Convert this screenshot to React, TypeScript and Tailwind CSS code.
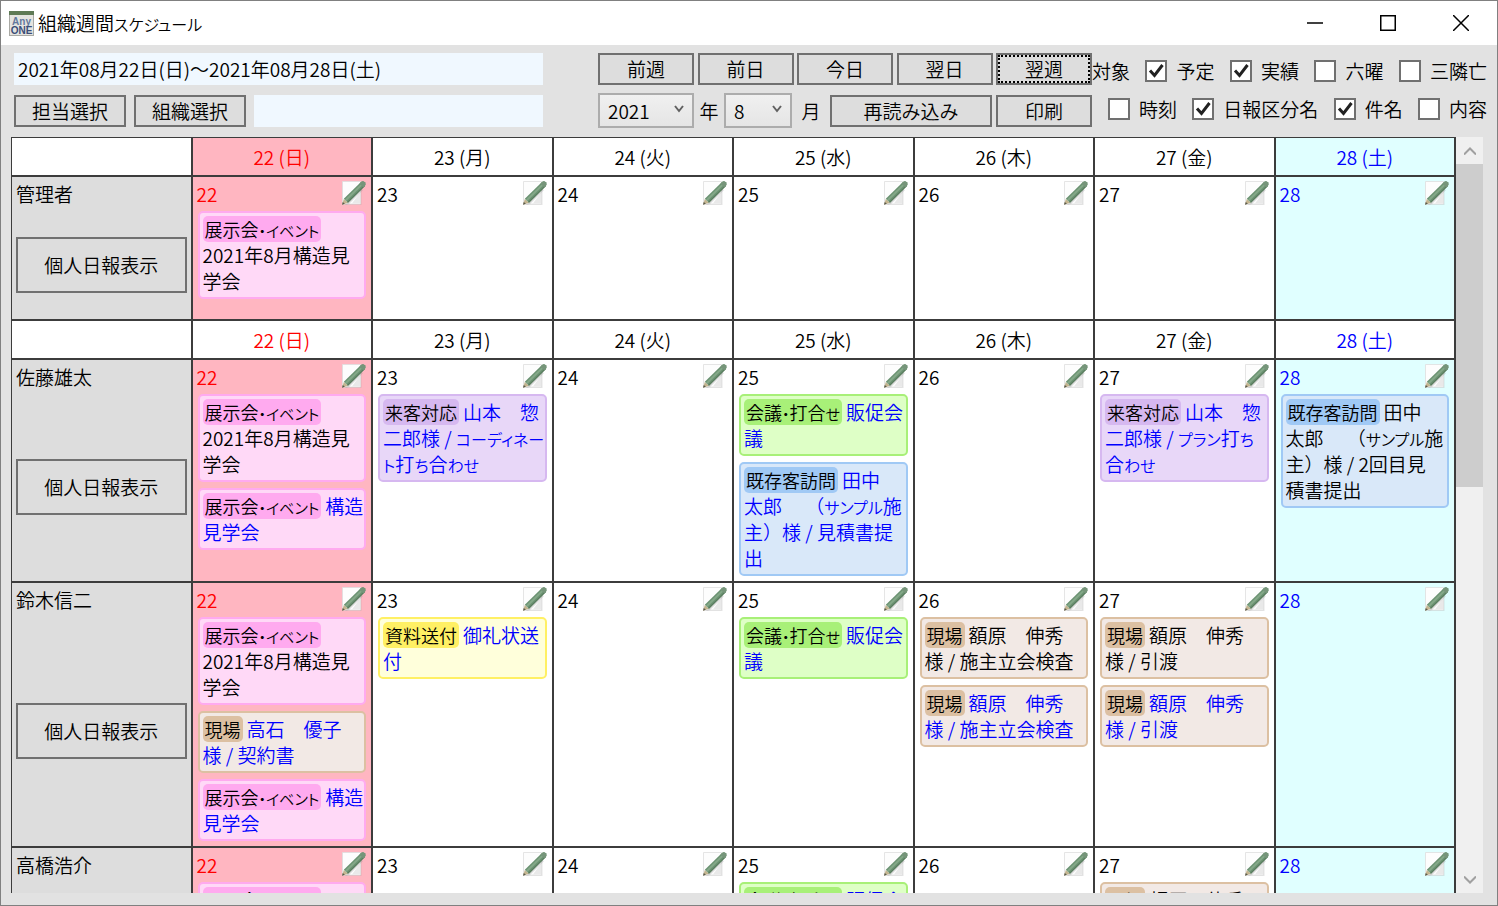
import React from 'react';
import clsx from 'clsx';

type Tone = 'pink' | 'purple' | 'green' | 'blue' | 'yellow' | 'brown';

type Entry = {
  tone: Tone;
  tag: string;
  lines: string[];
  plan?: boolean;
};

type Member = {
  name: string;
  height: string;
  days: Entry[][];
};

const cardTones: Record<Tone, string> = {
  pink: 'bg-[#ffd9f7] border-[#ffaaef]',
  purple: 'bg-[#e8d7f8] border-[#d6b8f0]',
  green: 'bg-[#deffc6] border-[#a8f078]',
  blue: 'bg-[#d9e8f9] border-[#a0c9f5]',
  yellow: 'bg-[#ffffdb] border-[#fff064]',
  brown: 'bg-[#f2e9e5] border-[#dcc0a2]',
};

const tagTones: Record<Tone, string> = {
  pink: 'bg-[#ffaaef]',
  purple: 'bg-[#d6b8f0]',
  green: 'bg-[#a8f078]',
  blue: 'bg-[#a0c9f5]',
  yellow: 'bg-[#fff064]',
  brown: 'bg-[#dcc0a2]',
};

const week = [
  { date: 22, label: '日' },
  { date: 23, label: '月' },
  { date: 24, label: '火' },
  { date: 25, label: '水' },
  { date: 26, label: '木' },
  { date: 27, label: '金' },
  { date: 28, label: '土' },
];

const event: Entry = { tone: 'pink', tag: '展示会・イベント', lines: ['', '2021年8月構造見', '学会'] };
const eventPlan: Entry = { tone: 'pink', tag: '展示会・イベント', lines: ['構造', '見学会'], plan: true };
const meeting: Entry = { tone: 'green', tag: '会議・打合せ', lines: ['販促会', '議'], plan: true };
const inspection: Entry = { tone: 'brown', tag: '現場', lines: ['額原　伸秀', '様 / 施主立会検査'] };
const handover: Entry = { tone: 'brown', tag: '現場', lines: ['額原　伸秀', '様 / 引渡'] };

const admin: Member = { name: '管理者', height: 'h-[144px]', days: [[event], [], [], [], [], [], []] };

const members: Member[] = [
  {
    name: '佐藤雄太',
    height: 'h-[223px]',
    days: [
      [event, eventPlan],
      [{ tone: 'purple', tag: '来客対応', lines: ['山本　惣', '二郎様 / コーディネー', 'ト打ち合わせ'], plan: true }],
      [],
      [
        meeting,
        { tone: 'blue', tag: '既存客訪問', lines: ['田中', '太郎　 （サンプル施', '主）様 / 見積書提', '出'], plan: true },
      ],
      [],
      [{ tone: 'purple', tag: '来客対応', lines: ['山本　惣', '二郎様 / プラン打ち', '合わせ'], plan: true }],
      [{ tone: 'blue', tag: '既存客訪問', lines: ['田中', '太郎　 （サンプル施', '主）様 / 2回目見', '積書提出'] }],
    ],
  },
  {
    name: '鈴木信二',
    height: 'h-[265px]',
    days: [
      [event, { tone: 'brown', tag: '現場', lines: ['高石　優子', '様 / 契約書'], plan: true }, eventPlan],
      [{ tone: 'yellow', tag: '資料送付', lines: ['御礼状送', '付'], plan: true }],
      [],
      [meeting],
      [inspection, { ...inspection, plan: true }],
      [handover, { ...handover, plan: true }],
      [],
    ],
  },
  {
    name: '高橋浩介',
    height: 'h-[223px]',
    days: [[event], [], [], [meeting], [], [handover], []],
  },
];

const dayText = (i: number) => clsx(i === 0 && 'text-[#ff0000]', i === 6 && 'text-[#0000ff]');
const dayBg = (i: number) => (i === 0 ? 'bg-[#ffb6c1]' : i === 6 ? 'bg-[#e0ffff]' : 'bg-white');

// kana is set a little smaller and proportionally, kanji keeps the full body
const Kana = ({ text, className = 'text-[16px]' }: { text: string; className?: string }) => (
  <span>
    {text.split(/([ぁ-ヿ]+)/).map((part, i) =>
      i % 2 ? (
        <span key={i} className={clsx("leading-none [font-feature-settings:'palt']", className)}>{part}</span>
      ) : (
        part
      )
    )}
  </span>
);

const PencilIcon = () => (
  <svg className="w-[26px] h-[26px]" viewBox="0 0 26 26">
    <path d="M2.500 2h18v23h-18z" fill="#999" opacity="0.250" />
    <path d="M1.500 1.500h18v22.500h-18z" fill="#fdfdfd" stroke="#dedede" strokeWidth="0.800" />
    <path d="M11 23.500h8v-11z" fill="#e9e9e9" />
    <path d="M4 25L20 9l2 1L8 24z" fill="#8c8c8c" opacity="0.300" />
    <path d="M1 24.800l1.800-5.800 4.200 3.800z" fill="#c4b590" />
    <path d="M1 24.800l.8-2.800 2 1.800z" fill="#5a5a4c" />
    <path d="M2.800 18.800L20 2q2-1.400 3.800.3 1.600 1.800.1 3.800L7 22.800z" fill="#6b9272" />
    <path d="M4 19.500L20.800 3.200l1.400 1.300L5.400 20.900z" fill="#84a888" />
    <path d="M6.200 22.100L23.600 5l.2 1.200L7 22.800z" fill="#587b5d" />
    <path d="M20 2q2-1.400 3.800.3 1.600 1.800.1 3.800l-1.500 1.500-4-4z" fill="#76957a" />
  </svg>
);

const AppIcon = () => (
  <svg className="w-[25px] h-[25px]" viewBox="0 0 25 25">
    <rect x="0.500" y="0.500" width="24" height="24" fill="#e4e4e0" stroke="#a9a9a4" />
    <rect width="25" height="4" fill="#5e7a55" />
    <text x="12.500" y="14" textAnchor="middle" fontSize="10" fontWeight="700" fontFamily="Liberation Sans, sans-serif" fill="#62789c">Any</text>
    <text x="12.500" y="23" textAnchor="middle" fontSize="10" fontWeight="700" fontFamily="Liberation Sans, sans-serif" fill="#3a4d78">ONE</text>
  </svg>
);

const ToolButton = ({ children, className }: { children: React.ReactNode; className?: string }) => (
  <button className={clsx('h-8 shrink-0 border-2 border-[#707070] bg-[#dddddd] leading-7 text-center', className)}>{children}</button>
);

const Check = ({ label, checked }: { label: string; checked?: boolean }) => (
  <label className="flex items-center gap-[9px] whitespace-nowrap">
    <span className="relative w-[22px] h-[22px]">
      <input type="checkbox" defaultChecked={checked} className="peer block w-[22px] h-[22px] appearance-none border-2 border-[#707070] bg-white" />
      <svg className="absolute inset-0 hidden peer-checked:block pointer-events-none" viewBox="0 0 22 22" fill="none" stroke="#212121" strokeWidth="3">
        <path d="M5 10.500l4.500 5L17.500 5" />
      </svg>
    </span>
    {label}
  </label>
);

const Picker = ({ label, value, options, className }: { label: string; value: string; options: string[]; className: string }) => (
  <span className={clsx('relative shrink-0', className)}>
    <select aria-label={label} defaultValue={value} className="w-full h-[35px] appearance-none border-2 border-[#acacac] bg-linear-to-b from-[#f0f0f0] to-[#e5e5e5] pl-2">
      {options.map((o) => (
        <option key={o}>{o}</option>
      ))}
    </select>
    <svg className="absolute right-2.5 top-3 w-2.5 h-2 pointer-events-none" viewBox="0 0 10 8" fill="none" stroke="#606060" strokeWidth="2">
      <path d="M1 1l4 5 4-5" />
    </svg>
  </span>
);

const EntryCard = ({ entry }: { entry: Entry }) => (
  <div className={clsx('rounded-[5px] border-2 p-[3px] leading-[26px] whitespace-pre', cardTones[entry.tone], entry.plan && 'text-[#0000ff]')}>
    <div className="flex h-[26px] gap-1">
      <span className={clsx('rounded-[5px] px-0.5 text-[18px] text-black', tagTones[entry.tone])}>
        <Kana text={entry.tag} className="text-[15px]" />
      </span>
      {entry.lines[0]}
    </div>
    {entry.lines.slice(1).map((line) => (
      <div key={line} className="h-[26px]">
        <Kana text={line} />
      </div>
    ))}
  </div>
);

const MemberRow = ({ member }: { member: Member }) => (
  <tr className={member.height}>
    <th scope="row" className="h-px border-r-2 border-b-2 border-[#3c3c3c] bg-[#dddddd] p-0 [font-weight:inherit] text-left">
      <div className="flex h-full flex-col px-1">
        <div className="pt-[3px] leading-[28px]">{member.name}</div>
        <div className="flex flex-1 items-center pt-0.5">
          <button className="h-14 w-full border-2 border-[#707070]">個人日報表示</button>
        </div>
      </div>
    </th>
    {member.days.map((entries, i) => (
      <td key={week[i].date} className={clsx('border-r-2 border-b-2 border-[#3c3c3c] p-0 align-top', dayBg(i))}>
        <div className="flex h-[34px] justify-between pt-[3px] px-1">
          <span className={clsx('leading-[28px]', dayText(i))}>{week[i].date}</span>
          <button aria-label="編集" className="h-[26px]">
            <PencilIcon />
          </button>
        </div>
        <div className="flex flex-col gap-1.5 px-[5px] pb-1">
          {entries.map((entry, n) => (
            <EntryCard key={n} entry={entry} />
          ))}
        </div>
      </td>
    ))}
  </tr>
);

const WeekHeader = ({ tinted }: { tinted?: boolean }) => (
  <tr className="h-[39px]">
    <td className="border-r-2 border-b-2 border-[#3c3c3c] bg-white p-0" />
    {week.map((day, i) => (
      <th key={day.date} scope="col" className={clsx('border-r-2 border-b-2 border-[#3c3c3c] p-0 [font-weight:inherit]', tinted ? dayBg(i) : 'bg-white', dayText(i))}>
        {day.date} ({day.label})
      </th>
    ))}
  </tr>
);

const App = () => {
  return (
    <div className="flex h-screen flex-col border border-[#808080] bg-[#e2e2e2] font-['Noto_Sans_CJK_JP',sans-serif] font-[350] text-[19px] leading-[28px] text-black">
      <header className="flex h-11 shrink-0 items-center bg-white pl-2">
        <AppIcon />
        <h1 className="flex-1 pl-1 [font-weight:inherit]">
          <Kana text="組織週間スケジュール" />
        </h1>
        <button aria-label="最小化" className="flex w-[73px] justify-center">
          <svg className="w-4 h-4" viewBox="0 0 16 16" stroke="#000" strokeWidth="1.500"><path d="M0 8h16" /></svg>
        </button>
        <button aria-label="最大化" className="flex w-[73px] justify-center">
          <svg className="w-4 h-4" viewBox="0 0 16 16" fill="none" stroke="#000" strokeWidth="1.500"><path d="M.75 .75h14.500v14.500H.75z" /></svg>
        </button>
        <button aria-label="閉じる" className="flex w-[73px] justify-center">
          <svg className="w-4 h-4" viewBox="0 0 16 16" stroke="#000" strokeWidth="1.500"><path d="M0 0l16 16M16 0L0 16" /></svg>
        </button>
      </header>

      <div className="flex shrink-0 pt-2 pl-[13px] pr-2.5">
        <div className="flex flex-1 flex-col gap-2.5">
          <div className="h-8 bg-[#f0f8ff] px-1 leading-8">2021年08月22日(日)～2021年08月28日(土)</div>
          <div className="flex gap-2">
            <ToolButton className="w-28">担当選択</ToolButton>
            <ToolButton className="w-28">組織選択</ToolButton>
            <input aria-label="組織" readOnly className="h-8 min-w-0 flex-1 bg-[#f0f8ff] px-1" />
          </div>
        </div>

        <div className="ml-[55px] flex w-[494px] flex-col gap-2">
          <div className="flex justify-between">
            <ToolButton className="w-24">前週</ToolButton>
            <ToolButton className="w-24">前日</ToolButton>
            <ToolButton className="w-24">今日</ToolButton>
            <ToolButton className="w-24">翌日</ToolButton>
            <ToolButton className="w-24 outline-2 -outline-offset-4 outline-dotted outline-black">翌週</ToolButton>
          </div>
          <div className="flex items-center">
            <Picker label="年" value="2021" options={['2020', '2021', '2022']} className="w-24" />
            <span className="w-[30px] text-center">年</span>
            <Picker label="月" value="8" options={['1', '2', '3', '4', '5', '6', '7', '8', '9', '10', '11', '12']} className="w-[68px]" />
            <span className="flex-1 text-center">月</span>
            <ToolButton className="w-[162px]">再読み込み</ToolButton>
            <ToolButton className="ml-1 w-24">印刷</ToolButton>
          </div>
        </div>

        <div className="flex w-[395px] flex-col gap-2.5 pt-1">
          <div className="flex justify-between">
            <span>対象</span>
            <Check label="予定" checked />
            <Check label="実績" checked />
            <Check label="六曜" />
            <Check label="三隣亡" />
          </div>
          <div className="flex justify-between pl-4">
            <Check label="時刻" />
            <Check label="日報区分名" checked />
            <Check label="件名" checked />
            <Check label="内容" />
          </div>
        </div>
      </div>

      <main className="mt-[9px] mb-3 ml-2.5 mr-3.5 flex min-h-0 flex-1">
        <div className="min-w-0 flex-1 overflow-hidden border-t border-l border-[#3c3c3c]">
          <table className="w-full table-fixed border-separate border-spacing-0">
            <thead>
              <WeekHeader tinted />
            </thead>
            <tbody>
              <MemberRow member={admin} />
              <WeekHeader />
              {members.map((member) => (
                <MemberRow key={member.name} member={member} />
              ))}
            </tbody>
          </table>
        </div>
        <div className="flex w-[27px] shrink-0 flex-col bg-[#f0f0f0]">
          <button aria-label="上へ" className="flex h-[27px] items-center justify-center">
            <svg className="w-3 h-2" viewBox="0 0 12 8" fill="none" stroke="#a0a0a0" strokeWidth="2"><path d="M0 7.500l6-6 6 6" /></svg>
          </button>
          <div className="flex-1">
            <div className="h-[46%] bg-[#cdcdcd]" />
          </div>
          <button aria-label="下へ" className="flex h-[27px] items-center justify-center">
            <svg className="w-3 h-2" viewBox="0 0 12 8" fill="none" stroke="#a0a0a0" strokeWidth="2"><path d="M0 .5l6 6 6-6" /></svg>
          </button>
        </div>
      </main>
    </div>
  );
};

export default App;
